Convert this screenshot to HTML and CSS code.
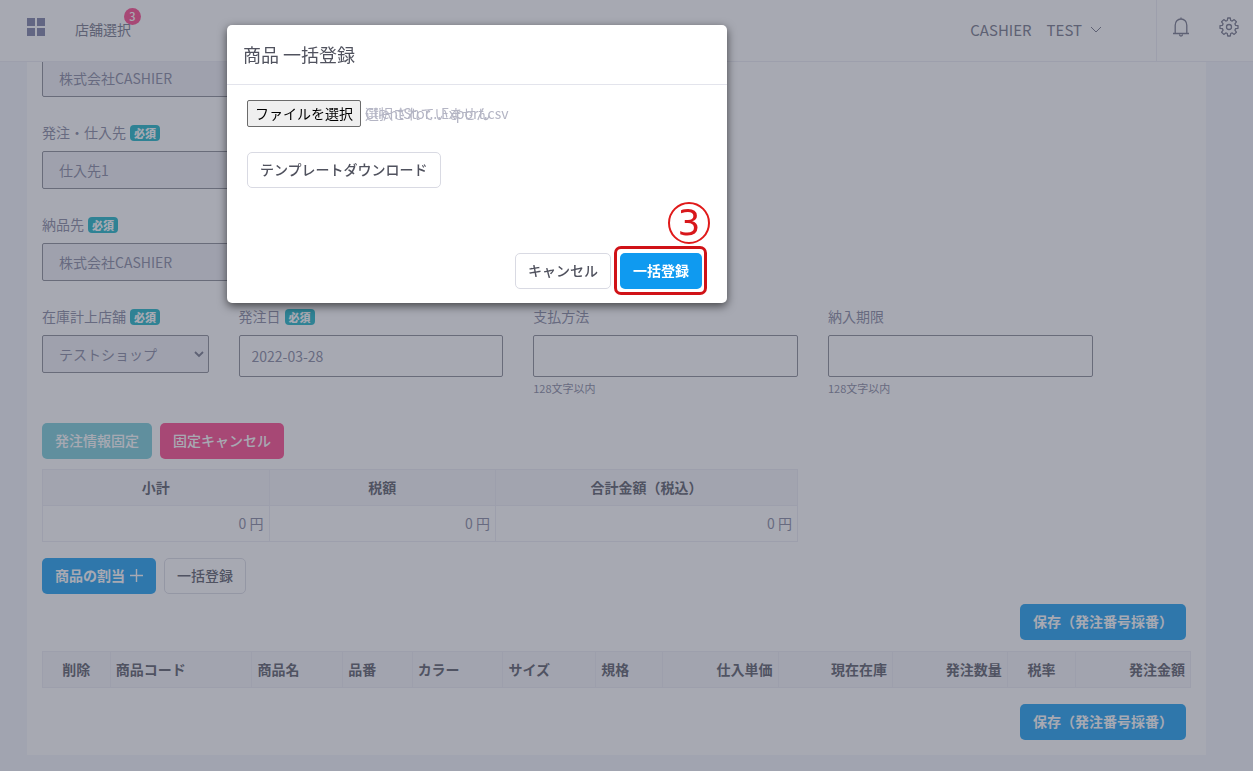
FILE: index.html
```html
<!DOCTYPE html>
<html lang="ja">
<head>
<meta charset="utf-8">
<meta name="viewport" content="width=device-width, initial-scale=1">
<title>商品 一括登録</title>
<link rel="stylesheet" href="styles.css">
</head>
<body>
<header class="topbar">
  <button class="icon-btn apps" type="button" aria-label="メニュー">
    <svg width="18" height="18" viewBox="0 0 18 18" fill="currentColor"><path d="M0 0h8v8H0zM10 0h8v8h-8zM0 10h8v8H0zM10 10h8v8h-8z"/></svg>
  </button>
  <a class="shop-link" href="#">店舗選択<span class="count">3</span></a>
  <button class="account" type="button">CASHIER　TEST
    <svg width="12" height="8" viewBox="0 0 12 8" fill="none" stroke="currentColor"><path d="M1 1l5 5 5-5"/></svg>
  </button>
  <div class="tools">
    <button class="icon-btn" type="button" aria-label="通知">
      <svg width="18" height="20" viewBox="0 0 18 20" fill="none" stroke="currentColor" stroke-width="1.300"><path d="M1 16.500h16M3.200 16.300v-8C3.200 4.500 5.600 2 9 2s5.800 2.500 5.800 6.300v8M9 2V.5M7.500 17.500a1.500 1.500 0 0 0 3 0"/></svg>
    </button>
    <button class="icon-btn" type="button" aria-label="設定">
      <svg width="20" height="20" viewBox="0 0 20 20" fill="none" stroke="currentColor" stroke-width="1.300" stroke-linejoin="round"><path d="M8.700 1h2.600l.4 2.500 1.500.6 2-1.500 2.200 2.200-1.500 2 .6 1.500 2.500.4v2.600l-2.500.4-.6 1.500 1.500 2-2.200 2.200-2-1.500-1.500.6-.4 2.500H8.700l-.4-2.500-1.500-.6-2 1.500-2.200-2.200 1.500-2-.6-1.500L1 11.300V8.700l2.500-.4.6-1.500-1.500-2 2.200-2.200 2 1.500 1.500-.6z"/><circle cx="10" cy="10" r="2.500"/></svg>
    </button>
  </div>
</header>

<main class="card">
  <div class="field half">
    <input class="control locked" type="text" value="株式会社CASHIER" aria-label="発注元" readonly>
  </div>
  <div class="field half">
    <label for="supplier">発注・仕入先 <span class="required">必須</span></label>
    <input class="control locked" id="supplier" type="text" value="仕入先1" readonly>
  </div>
  <div class="field half">
    <label for="deliver">納品先 <span class="required">必須</span></label>
    <input class="control locked" id="deliver" type="text" value="株式会社CASHIER" readonly>
  </div>
  <div class="field-row">
    <div class="field">
      <label for="stock">在庫計上店舗 <span class="required">必須</span></label>
      <div class="select-wrap">
        <select class="control locked" id="stock"><option>テストショップ</option></select>
        <svg class="arrow" width="10" height="7" viewBox="0 0 10 7" fill="none" stroke="currentColor" stroke-width="1.800"><path d="M1 1l4 4 4-4"/></svg>
      </div>
    </div>
    <div class="field">
      <label for="date">発注日 <span class="required">必須</span></label>
      <input class="control tall" id="date" type="text" value="2022-03-28">
    </div>
    <div class="field">
      <label for="pay">支払方法</label>
      <input class="control tall" id="pay" type="text">
      <small class="help">128文字以内</small>
    </div>
    <div class="field">
      <label for="due">納入期限</label>
      <input class="control tall" id="due" type="text">
      <small class="help">128文字以内</small>
    </div>
  </div>

  <div class="actions">
    <button class="btn info" type="button">発注情報固定</button>
    <button class="btn danger" type="button">固定キャンセル</button>
  </div>

  <table class="grid totals">
    <colgroup><col class="w-part"><col class="w-part"><col></colgroup>
    <thead><tr><th>小計</th><th>税額</th><th>合計金額（税込）</th></tr></thead>
    <tbody><tr><td>0 円</td><td>0 円</td><td>0 円</td></tr></tbody>
  </table>

  <div class="actions">
    <button class="btn primary" type="button">商品の割当
      <svg width="13" height="13" viewBox="0 0 13 13" stroke="currentColor" stroke-width="1.400"><path d="M6.500 0v13M0 6.500h13"/></svg>
    </button>
    <button class="btn outline" type="button">一括登録</button>
  </div>

  <div class="save"><button class="btn primary" type="button">保存（発注番号採番）</button></div>

  <table class="grid items">
    <colgroup>
      <col style="width:5.900%"><col style="width:12.350%"><col style="width:7.900%"><col style="width:6.050%"><col style="width:7.910%"><col style="width:8.090%">
      <col style="width:5.830%"><col style="width:10.050%"><col style="width:9.960%"><col style="width:10%"><col style="width:5.960%"><col style="width:10%">
    </colgroup>
    <thead>
      <tr>
        <th>削除</th><th class="start">商品コード</th><th class="start">商品名</th><th class="start">品番</th><th class="start">カラー</th><th class="start">サイズ</th>
        <th class="start">規格</th><th class="end">仕入単価</th><th class="end">現在在庫</th><th class="end">発注数量</th><th>税率</th><th class="end">発注金額</th>
      </tr>
    </thead>
  </table>

  <div class="save last"><button class="btn primary" type="button">保存（発注番号採番）</button></div>
</main>

<div class="backdrop"></div>

<section class="modal" role="dialog" aria-labelledby="modal-title">
  <h2 class="modal-title" id="modal-title">商品 一括登録</h2>
  <div class="modal-body">
    <div class="file">
      <input class="file-input" id="csv" type="file">
      <label class="file-btn" for="csv">ファイルを選択</label>
      <span class="file-name"><span>ClientStor...Export.csv</span><span>選択されていません</span></span>
    </div>
    <button class="btn outline" type="button">テンプレートダウンロード</button>
  </div>
  <div class="modal-foot">
    <button class="btn outline" type="button">キャンセル</button>
    <div class="marked">
      <button class="btn primary" type="button">一括登録</button>
      <span class="step">3</span>
    </div>
  </div>
</section>
</body>
</html>
```

FILE: styles.css
```css
* { box-sizing: border-box; }

body {
  margin: 0;
  min-height: 100vh;
  background: #f3f4fb;
  color: #7f819a;
  font: 14px/21px "Noto Sans CJK JP", sans-serif;
}

button, input, select { font: inherit; color: inherit; }
button { cursor: pointer; }
svg { display: block; flex: none; }

.topbar {
  position: fixed;
  inset: 0 0 auto;
  z-index: 1;
  height: 62px;
  display: flex;
  align-items: center;
  padding: 0 0 2px 27px;
  background: #fff;
  border-bottom: 1px solid #eaebf2;
}
.icon-btn { padding: 0; border: 0; background: none; }
.apps { margin: 0 30px 6px 0; color: #7479a0; }
.shop-link { position: relative; color: #6c6e82; text-decoration: none; }
.count {
  position: absolute;
  top: -11px;
  right: -10px;
  width: 17px;
  height: 17px;
  border-radius: 50%;
  background: #ff3d85;
  color: #fff;
  font-size: 11px;
  font-weight: 500;
  line-height: 17px;
  text-align: center;
}
.account {
  display: flex;
  align-items: center;
  gap: 8px;
  margin-left: auto;
  padding: 0;
  border: 0;
  background: none;
  color: #6c6e82;
  font-size: 15px;
}
.tools {
  align-self: stretch;
  display: flex;
  align-items: center;
  gap: 29px;
  margin: 0 0 -2px 54px;
  padding: 0 14px 7px 15px;
  border-left: 1px solid #eaebf2;
  color: #6c6e82;
}

.card {
  margin: 0 47px 16px 27px;
  padding: 59px 15px 15px;
  background: #fff;
}
.field { margin-bottom: 25px; }
.half { width: 50%; }
.field label { display: flex; align-items: center; gap: 4px; height: 21px; margin-bottom: 8px; }
.required {
  padding: 0 4px;
  border-radius: 4px;
  background: #0fb1c3;
  color: #fff;
  font-size: 11px;
  font-weight: 900;
  line-height: 16px;
}
.control {
  display: block;
  width: 100%;
  height: 38px;
  padding: 0 16px;
  border: 1px solid #82848f;
  border-radius: 2px;
  background: #fff;
  appearance: none;
}
.control.locked { background: #eeeff5; }
.control.tall { height: 42px; padding: 0 12px; }
.select-wrap { position: relative; }
.arrow { position: absolute; right: 5px; top: 16px; color: #6c6e82; }
.help { display: block; margin-top: 1px; font-size: 11px; line-height: 20px; }

.field-row { display: grid; grid-template-columns: 2fr 3fr 3fr 3fr 1fr; margin: 0 -15px; }
.field-row .field { padding: 0 15px; }

.actions { display: flex; gap: 8px; margin-bottom: 10px; }
.btn {
  display: inline-flex;
  align-items: center;
  gap: 5px;
  height: 36px;
  padding: 0 12px 2px;
  border: 1px solid transparent;
  border-radius: 5px;
  color: #fff;
  font-weight: 500;
  white-space: nowrap;
}
.info { background: #71cbd7; }
.danger { background: #ff3d85; }
.primary { background: #0f9af0; font-weight: 700; }
.outline { border-color: #d9dae3; background: #fff; color: #50525e; }

.grid { border-collapse: collapse; table-layout: fixed; width: 100%; }
.grid th, .grid td { height: 36px; padding: 0 5px; border: 1px solid #eaebf2; }
.grid th { background: #f5f5f9; color: #50525e; font-weight: 700; }
.grid td { text-align: right; }
.grid .start { text-align: left; }
.grid .end { text-align: right; }
.totals { width: calc(66.667% - 10px); margin-bottom: 16px; }
.w-part { width: 30%; }

.save { display: flex; justify-content: flex-end; margin: 0 5px 11px 0; }
.save.last { margin: 16px 5px 0 0; }

.backdrop { position: fixed; inset: 0; z-index: 2; background: rgba(79, 83, 101, .5); }

.modal {
  position: fixed;
  top: 25px;
  left: 227px;
  z-index: 3;
  width: 500px;
  border-radius: 5px;
  background: #fff;
  box-shadow: 0 3px 10px rgba(0, 0, 0, .6);
}
.modal-title {
  margin: 0;
  padding: 15px 16px 16px;
  border-bottom: 1px solid #e3e4ec;
  color: #50525e;
  font-size: 18px;
  font-weight: 400;
  line-height: 28px;
}
.modal-body { padding: 15px 20px 0; }
.file { display: flex; align-items: center; gap: 4px; margin-bottom: 25px; }
.file-input { position: absolute; width: 1px; height: 1px; opacity: 0; }
.file-btn {
  padding: 2px 7px;
  border: 1px solid #6b6b6b;
  border-radius: 2px;
  background: #efefef;
  color: #000;
}
.file-name { display: grid; color: #b4b5c4; }
.file-name span { grid-area: 1 / 1; white-space: nowrap; }
.modal-foot { display: flex; justify-content: flex-end; gap: 9px; padding: 65px 25px 14px; }
.marked { position: relative; }
.marked::after {
  content: "";
  position: absolute;
  inset: -7px -5px -6px -6px;
  border: 3px solid #d01217;
  border-radius: 7px;
  pointer-events: none;
}
.step {
  position: absolute;
  right: -8px;
  bottom: 45px;
  width: 42px;
  height: 42px;
  border: 2px solid #e01a1a;
  border-radius: 50%;
  color: #d8171b;
  font: 36px/38px "DejaVu Sans", sans-serif;
  text-align: center;
}
```
